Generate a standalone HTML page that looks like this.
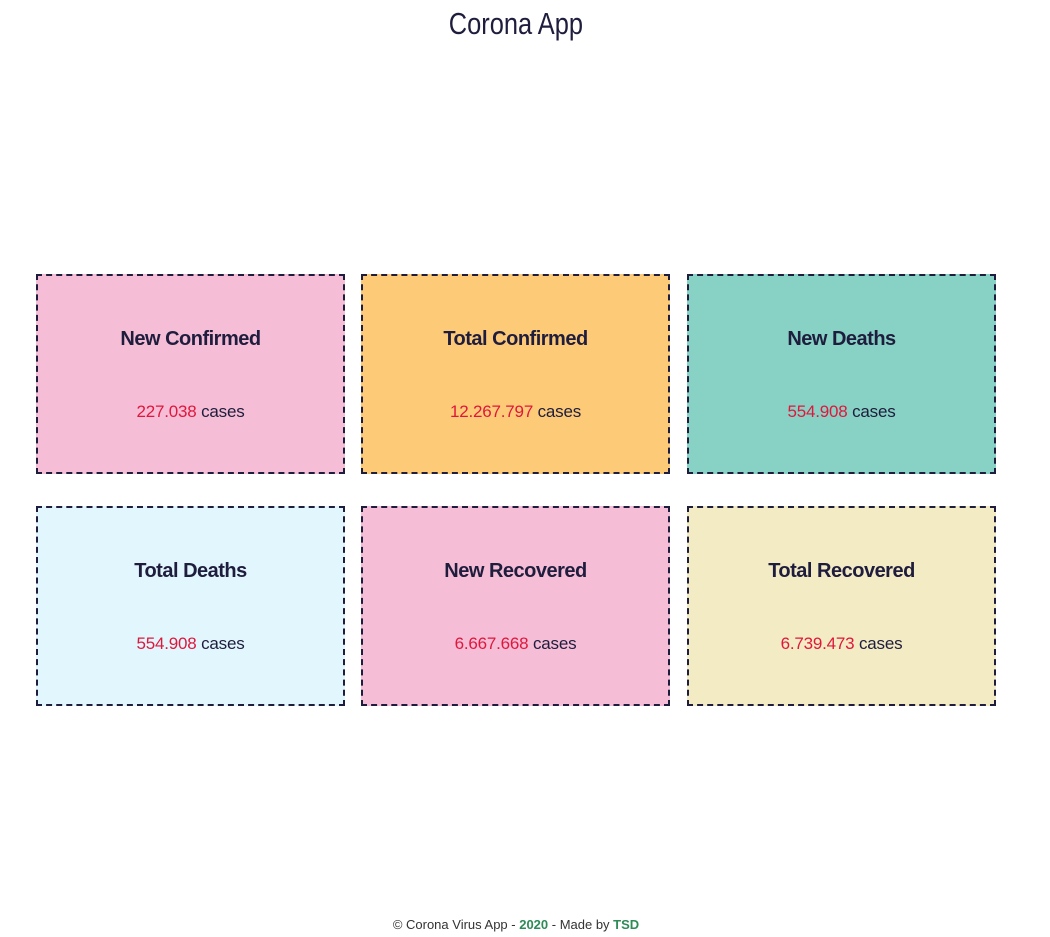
<!DOCTYPE html>
<html><head><meta charset="utf-8"><style>
body{margin:0;width:1050px;height:937px;background:#fff;font-family:"Liberation Sans",sans-serif;color:#1f1d3d;position:relative}
h1{position:absolute;top:4px;left:0;width:1032px;text-align:center;margin:0;font-weight:normal;font-size:31px;line-height:40px}
h1 span{display:inline-block;transform:scaleX(0.82)}
.b{position:absolute;width:305px;height:196px;border:2px dashed #1f1d3d;box-sizing:content-box}
.t{position:absolute;top:52px;width:100%;text-align:center;font-weight:bold;font-size:20px;letter-spacing:-0.5px}
.v{position:absolute;top:126px;width:100%;text-align:center;font-size:17px;letter-spacing:-0.2px}
.v b{color:#e0173d;font-weight:normal}
.f{position:absolute;top:917px;left:0;width:1032px;text-align:center;font-size:13px;color:#333}
.f b{color:#2e8b57}
</style></head><body>
<h1><span>Corona App</span></h1>
<div class="b" style="left:36px;top:274px;background:#f5bdd6"><div class="t">New Confirmed</div><div class="v"><b>227.038</b> cases</div></div>
<div class="b" style="left:361px;top:274px;background:#fdca77"><div class="t">Total Confirmed</div><div class="v"><b>12.267.797</b> cases</div></div>
<div class="b" style="left:687px;top:274px;background:#87d2c4"><div class="t">New Deaths</div><div class="v"><b>554.908</b> cases</div></div>
<div class="b" style="left:36px;top:506px;background:#e2f7fd"><div class="t">Total Deaths</div><div class="v"><b>554.908</b> cases</div></div>
<div class="b" style="left:361px;top:506px;background:#f5bdd6"><div class="t">New Recovered</div><div class="v"><b>6.667.668</b> cases</div></div>
<div class="b" style="left:687px;top:506px;background:#f3ebc3"><div class="t">Total Recovered</div><div class="v"><b>6.739.473</b> cases</div></div>
<div class="f">© Corona Virus App - <b>2020</b> - Made by <b>TSD</b></div>
</body></html>
